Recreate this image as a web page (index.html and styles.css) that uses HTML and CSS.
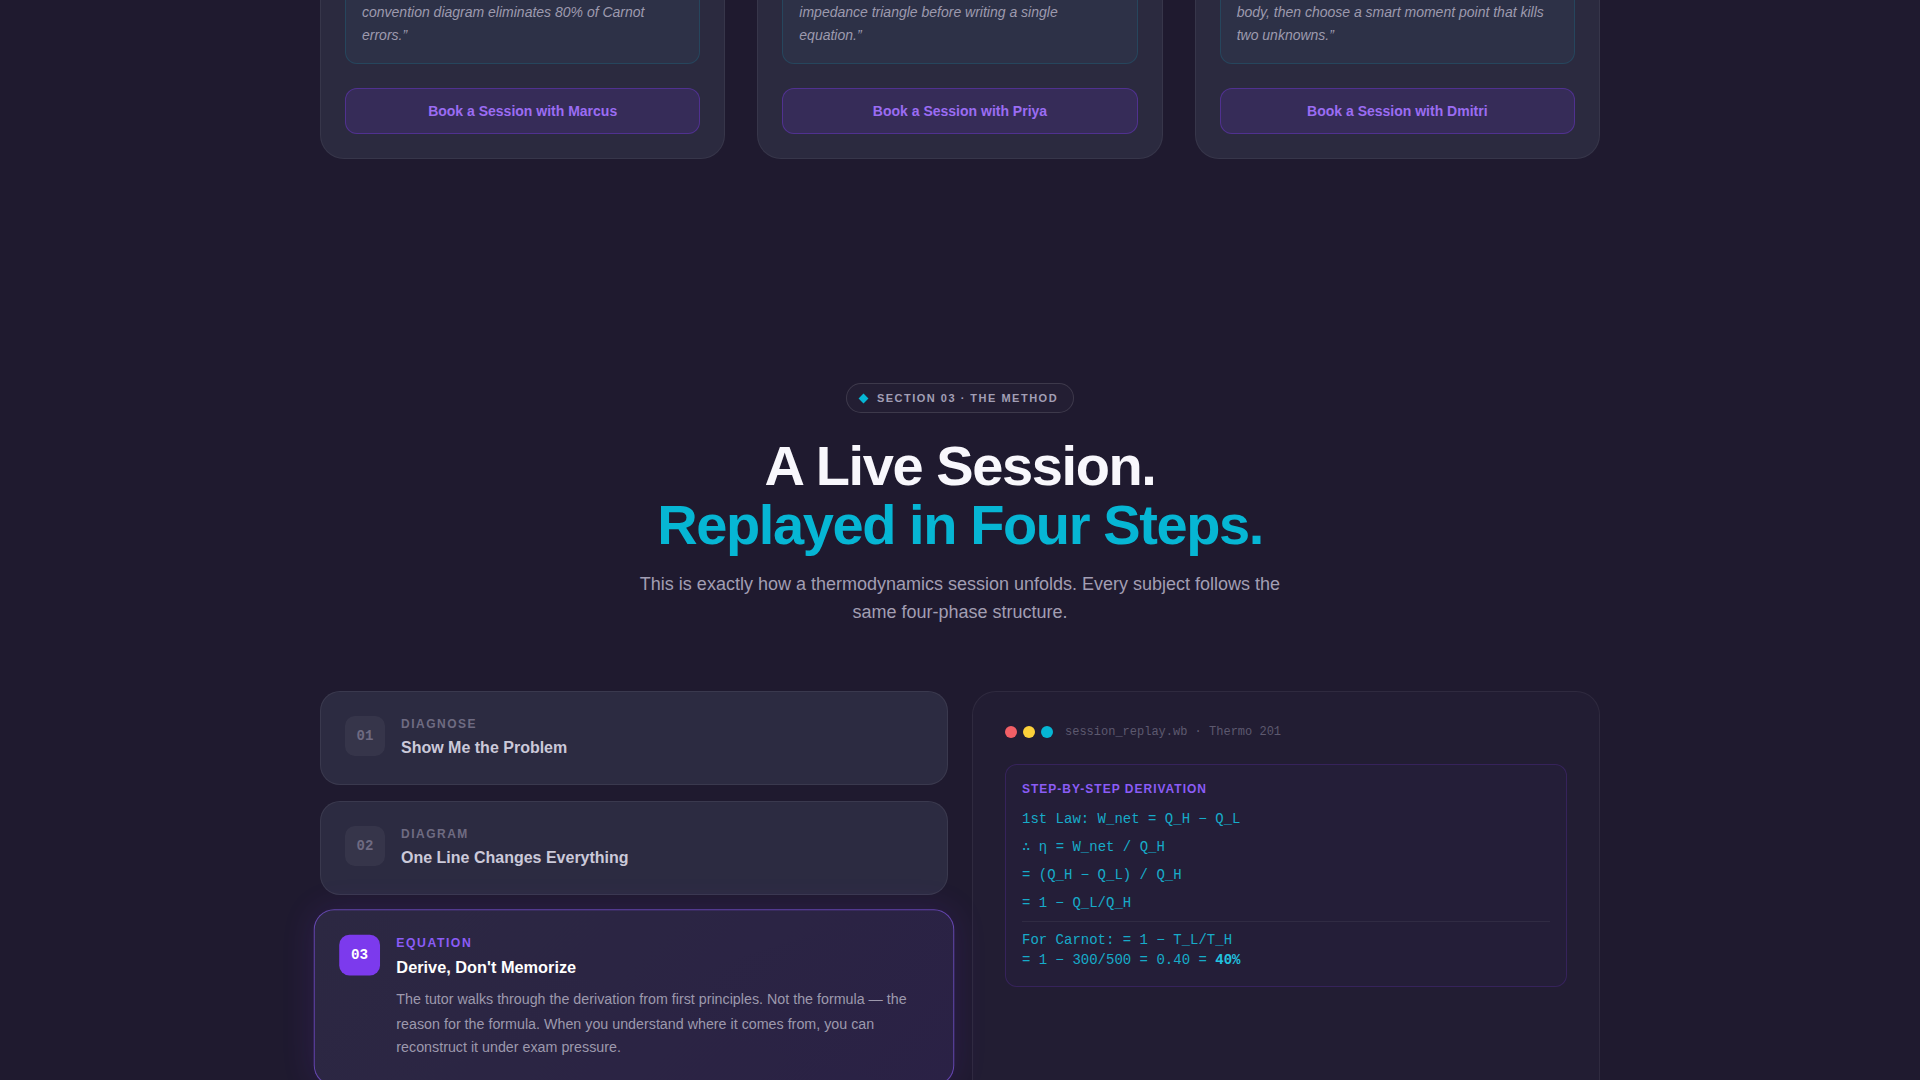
FILE: index.html
```html
<!DOCTYPE html>
<html lang="en">
<head>
<meta charset="utf-8">
<title>The Method</title>
<link rel="stylesheet" href="styles.css">
</head>
<body>
<div class="page">
  <section class="tutors">
    <div class="container tutor-grid">
      <article class="tutor-card">
        <blockquote class="quote">“Marcus showed me that one sign<br>convention diagram eliminates 80% of Carnot errors.”</blockquote>
        <button class="book-btn">Book a Session with Marcus</button>
      </article>
      <article class="tutor-card">
        <blockquote class="quote">“Priya always has you draw the<br>impedance triangle before writing a single equation.”</blockquote>
        <button class="book-btn">Book a Session with Priya</button>
      </article>
      <article class="tutor-card">
        <blockquote class="quote">“Dmitri makes you isolate the<br>body, then choose a smart moment point that kills two unknowns.”</blockquote>
        <button class="book-btn">Book a Session with Dmitri</button>
      </article>
    </div>
  </section>

  <section class="method">
    <div class="container">
      <div class="method-head">
        <div class="eyebrow"><span class="diamond"></span>SECTION 03 · THE METHOD</div>
        <h2 class="method-title">A Live Session.<br><span class="accent">Replayed in Four Steps.</span></h2>
        <p class="method-sub">This is exactly how a thermodynamics session unfolds. Every subject follows the same four-phase structure.</p>
      </div>

      <div class="method-grid">
        <div class="steps">
          <div class="step">
            <div class="step-num">01</div>
            <div class="step-body">
              <div class="step-label">Diagnose</div>
              <div class="step-title">Show Me the Problem</div>
            </div>
          </div>
          <div class="step">
            <div class="step-num">02</div>
            <div class="step-body">
              <div class="step-label">Diagram</div>
              <div class="step-title">One Line Changes Everything</div>
            </div>
          </div>
          <div class="step active">
            <div class="step-num">03</div>
            <div class="step-body">
              <div class="step-label">Equation</div>
              <div class="step-title">Derive, Don't Memorize</div>
              <p class="step-desc">The tutor walks through the derivation from first principles. Not the formula — the reason for the formula. When you understand where it comes from, you can reconstruct it under exam pressure.</p>
            </div>
          </div>
          <div class="step">
            <div class="step-num">04</div>
            <div class="step-body">
              <div class="step-label">Practice</div>
              <div class="step-title">Now You Drive</div>
            </div>
          </div>
        </div>

        <div class="replay">
          <div class="replay-head">
            <span class="dot dot-red"></span>
            <span class="dot dot-yellow"></span>
            <span class="dot dot-cyan"></span>
            <span class="replay-file">session_replay.wb · Thermo 201</span>
          </div>
          <div class="derivation">
            <div class="deriv-label">STEP-BY-STEP DERIVATION</div>
            <div class="code-line">1st Law: W_net = Q_H − Q_L</div>
            <div class="code-line">∴ η = W_net / Q_H</div>
            <div class="code-line">= (Q_H − Q_L) / Q_H</div>
            <div class="code-line">= 1 − Q_L/Q_H</div>
            <div class="deriv-divider"></div>
            <div class="code-line tight">For Carnot: = 1 − T_L/T_H</div>
            <div class="code-line tight">= 1 − 300/500 = 0.40 = <strong>40%</strong></div>
          </div>
        </div>
      </div>
    </div>
  </section>
</div>
</body>
</html>
```

FILE: styles.css
```css
html, body {
  margin: 0;
  padding: 0;
  background: #1f1a2f;
  overflow: hidden;
  font-family: "Liberation Sans", Arial, sans-serif;
  color: #e6e4f0;
}

.page {
  margin-top: -64px;
}

.container {
  width: 1280px;
  margin: 0 auto;
}

/* ---------- tutor cards ---------- */
.tutor-grid {
  display: grid;
  grid-template-columns: repeat(3, 1fr);
  gap: 32px;
}

.tutor-card {
  background: #2b2a3f;
  border: 1px solid rgba(255, 255, 255, 0.06);
  border-radius: 24px;
  padding: 24px;
}

.quote {
  margin: 0 0 24px;
  padding: 16px;
  background: #2d3147;
  border: 1px solid rgba(6, 182, 212, 0.16);
  border-radius: 12px;
  font-style: italic;
  font-size: 14px;
  line-height: 23px;
  color: #9d9aae;
}

.book-btn {
  display: block;
  width: 100%;
  height: 46px;
  border-radius: 12px;
  background: rgba(124, 58, 237, 0.15);
  border: 1px solid rgba(124, 58, 237, 0.38);
  color: #9b6cf3;
  font-family: "Liberation Sans", Arial, sans-serif;
  font-weight: 700;
  font-size: 14px;
  cursor: pointer;
}

/* ---------- method ---------- */
.method {
  padding-top: 224px;
}

.method-head {
  text-align: center;
}

.eyebrow {
  display: inline-flex;
  align-items: center;
  gap: 9px;
  padding: 8px 15px 7px 12px;
  border: 1px solid rgba(255, 255, 255, 0.12);
  border-radius: 999px;
  background: rgba(255, 255, 255, 0.02);
  font-size: 11px;
  line-height: 13px;
  font-weight: 700;
  letter-spacing: 1.5px;
  color: #a29eb5;
}

.diamond {
  width: 7px;
  height: 7px;
  background: #06b6d4;
  transform: rotate(45deg);
  margin: 0 1px;
}

.method-title {
  margin: 23px 0 16px;
  font-size: 56px;
  line-height: 59px;
  font-weight: 700;
  letter-spacing: -1.4px;
  color: #f8f7fc;
}

.method-title .accent {
  color: #06b6d4;
}

.method-sub {
  max-width: 660px;
  margin: 0 auto;
  font-size: 18px;
  line-height: 28px;
  color: #a29eb3;
}

.method-grid {
  margin-top: 65px;
  display: grid;
  grid-template-columns: 1fr 1fr;
  gap: 24px;
  align-items: stretch;
}

.steps {
  display: flex;
  flex-direction: column;
  gap: 16px;
}

.step {
  display: flex;
  gap: 16px;
  padding: 24px;
  background: #2c2b41;
  border: 1px solid rgba(255, 255, 255, 0.07);
  border-radius: 20px;
}

.step-num {
  flex: 0 0 40px;
  height: 40px;
  border-radius: 10px;
  background: rgba(255, 255, 255, 0.05);
  display: flex;
  align-items: center;
  justify-content: center;
  font-family: "Liberation Mono", "DejaVu Sans Mono", monospace;
  font-weight: 700;
  font-size: 14px;
  color: #6f6b82;
}

.step-label {
  margin-bottom: 4px;
  font-size: 12px;
  line-height: 16px;
  font-weight: 700;
  letter-spacing: 1.5px;
  text-transform: uppercase;
  color: #6f6b82;
}

.step-title {
  font-size: 16px;
  line-height: 24px;
  font-weight: 700;
  color: #cbc9d9;
}

.step-desc {
  margin: 8px 0 0;
  font-size: 14px;
  line-height: 23.5px;
  color: #9d99ad;
}

.step.active {
  transform: scale(1.02);
  background: linear-gradient(135deg, #2c2842 0%, #2a2145 100%);
  border-color: rgba(139, 92, 246, 0.6);
  box-shadow: 0 0 32px rgba(124, 58, 237, 0.14);
}

.step.active .step-num {
  background: #7c3aed;
  color: #ffffff;
}

.step.active .step-label {
  color: #8b5cf6;
}

.step.active .step-title {
  color: #ffffff;
}

/* ---------- replay panel ---------- */
.replay {
  background: #221d33;
  border: 1px solid rgba(255, 255, 255, 0.06);
  border-radius: 24px;
  padding: 32px;
}

.replay-head {
  display: flex;
  align-items: center;
  gap: 6px;
  height: 16px;
  margin-bottom: 24px;
}

.dot {
  width: 12px;
  height: 12px;
  border-radius: 50%;
}

.dot-red { background: #f25f66; }
.dot-yellow { background: #fcd03a; }
.dot-cyan { background: #06b6d4; }

.replay-file {
  margin-left: 6px;
  font-family: "Liberation Mono", "DejaVu Sans Mono", monospace;
  font-size: 12px;
  color: #5d596f;
}

.derivation {
  padding: 16px;
  border: 1px solid rgba(124, 58, 237, 0.2);
  border-radius: 12px;
  background: rgba(124, 58, 237, 0.03);
}

.deriv-label {
  margin-bottom: 8px;
  font-size: 12px;
  line-height: 16px;
  font-weight: 700;
  letter-spacing: 1px;
  color: #8b5cf6;
}

.code-line {
  font-family: "Liberation Mono", "DejaVu Sans Mono", monospace;
  font-size: 14px;
  line-height: 28px;
  color: #17abc9;
}

.code-line.tight {
  line-height: 20px;
}

.code-line strong {
  color: #22c3e0;
}

.deriv-divider {
  margin: 4px 0 8px;
  border-top: 1px solid rgba(255, 255, 255, 0.06);
}
```
